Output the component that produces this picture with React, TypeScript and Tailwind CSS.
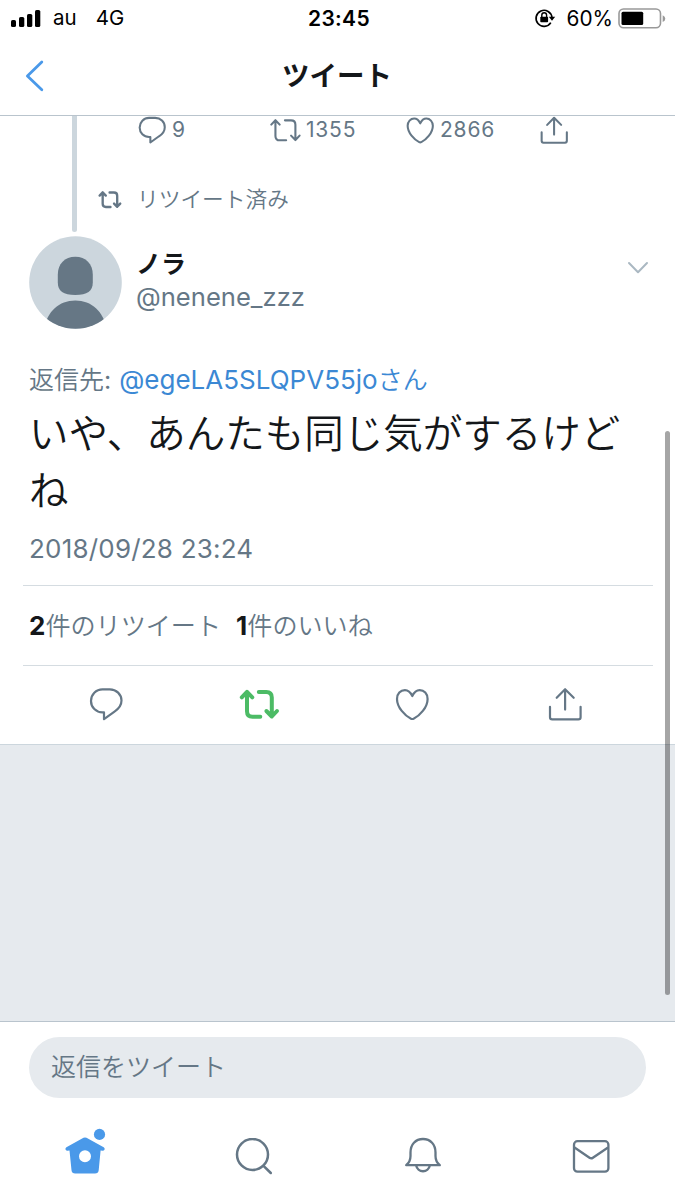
import type { ReactNode } from "react";

type IconProps = { className?: string; strokeWidth?: number };

const CommentIcon = ({ className, strokeWidth = 2.2 }: IconProps) => (
  <svg viewBox="0 0 34 34" fill="none" stroke="currentColor" strokeWidth={strokeWidth} strokeLinejoin="round" className={className}>
    <path d="M13.5 2.3h7.3c6.6 0 11.7 5 11.7 11.3 0 5-2.6 8.2-7 11L15 32.2v-6.8h-1.5C7 25.4 2 20.3 2 13.9S7 2.3 13.5 2.3z" />
  </svg>
);

const RetweetIcon = ({ className, strokeWidth = 4 }: IconProps) => (
  <svg viewBox="0 0 41 32" fill="none" stroke="currentColor" strokeWidth={strokeWidth} strokeLinecap="round" strokeLinejoin="round" className={className}>
    <path d="M2.8 9.3l5.2-5.5 5.3 5.5M8 4.5v18.8c0 3.8 1.7 5.5 5.5 5.5h7.8" />
    <path d="M19.8 4h7.5c3.8 0 5.5 1.7 5.5 5.5v18M27.4 23l5.4 5.5L38 23" />
  </svg>
);

const HeartIcon = ({ className, strokeWidth = 2.2 }: IconProps) => (
  <svg viewBox="0 0 34 34" fill="none" stroke="currentColor" strokeWidth={strokeWidth} strokeLinejoin="round" className={className}>
    <path d="M17.3 9C15.5 5.2 12.8 3.1 9.9 3.1 5.5 3.1 2 6.8 2 11.9c0 8.5 8 17 14 19.8q1.3.6 2.6 0c6-2.8 14-11.3 14-19.8 0-5.1-3.5-8.8-7.9-8.8-2.9 0-5.6 2.1-7.4 5.9z" />
  </svg>
);

const ShareIcon = ({ className, strokeWidth = 2.2 }: IconProps) => (
  <svg viewBox="0 0 34 34" fill="none" stroke="currentColor" strokeWidth={strokeWidth} strokeLinecap="round" strokeLinejoin="round" className={className}>
    <path d="M8.7 10.8l8.4-8.6 8.6 8.6M17.1 2.6v20" />
    <path d="M2 19.8v10.4q0 2.2 2.2 2.2h26.2q2.2 0 2.2-2.2V19.8" />
  </svg>
);

const StatusBar = () => (
  <div className="flex h-[37px] shrink-0 text-black">
    <div className="flex w-[225px] items-center pl-[10px]">
      <svg viewBox="0 0 32 20" className="h-5 w-8 -translate-y-px">
        <rect x="1" y="12" width="5" height="7" rx="1.6" />
        <rect x="9" y="9" width="5.3" height="10" rx="1.6" />
        <rect x="17" y="6" width="5.3" height="13" rx="1.6" />
        <rect x="25" y="2" width="5.3" height="17" rx="1.6" />
      </svg>
      <span className="ml-[11px] text-[20.5px]">au</span>
      <span className="ml-[19px] text-[20.5px]">4G</span>
    </div>
    <div className="flex w-[228px] items-center justify-center text-[21px] font-semibold tracking-[0.3px]">23:45</div>
    <div className="flex flex-1 items-center justify-end pr-[9px]">
      <svg viewBox="0 0 22 20" className="h-5 w-[22px] -translate-y-px">
        <path d="M16.8 14.6A8 8 0 1 1 18 9.5" fill="none" stroke="black" strokeWidth="1.7" />
        <path d="M14.8 8.8h6.4L18 12.7z" />
        <rect x="6.3" y="8.8" width="7.8" height="5.5" rx="0.8" />
        <path d="M7.8 9V7.2a2.4 2.4 0 0 1 4.8 0V9" fill="none" stroke="black" strokeWidth="1.4" />
      </svg>
      <span className="ml-[11px] text-[20.8px]">60%</span>
      <svg viewBox="0 0 48 22" className="ml-[5px] h-[22px] w-12">
        <rect x="1" y="1" width="41.5" height="18.8" rx="4.5" fill="none" stroke="#999" strokeWidth="1.6" />
        <rect x="3.5" y="3.7" width="21.7" height="13.4" rx="1.5" />
        <path d="M44.7 7.3q2.6 1.2 2.6 3.4t-2.6 3.4z" fill="#999" />
      </svg>
    </div>
  </div>
);

const Header = () => (
  <header className="flex h-[79px] shrink-0 items-center border-b border-[#b9c4cd]">
    <div className="w-[225px] pl-[25px]">
      <svg viewBox="0 0 20 32" className="h-8 w-5" fill="none" stroke="#4a99e9" strokeWidth="2.8" strokeLinecap="round" strokeLinejoin="round">
        <path d="M16.8 2L2.4 16l14.4 13.8" />
      </svg>
    </div>
    <h1 className="w-[224px] pt-[2px] text-center text-[27.5px] leading-none font-bold text-[#14171a]">ツイート</h1>
  </header>
);

const Stat = ({ icon, value, className }: { icon: ReactNode; value?: string; className: string }) => (
  <div className={`flex items-center ${className}`}>
    {icon}
    <span className="text-[21px] leading-none tracking-[0.8px]">{value}</span>
  </div>
);

const ParentTweet = () => (
  <div className="flex h-[117px]">
    <div className="flex w-[98px] justify-end pr-[21px]">
      <div className="h-[116px] w-[5px] rounded-b-sm bg-[#ccd6dd]" />
    </div>
    <div className="flex flex-1 flex-col">
      <div className="flex h-[27px] items-center pl-10">
        <Stat className="w-[131px] gap-[6px]" icon={<CommentIcon strokeWidth={2.5} className="h-7 w-7" />} value="9" />
        <Stat className="w-[137px] gap-1" icon={<RetweetIcon strokeWidth={2.6} className="h-[26px] w-[33px]" />} value="1355" />
        <Stat className="w-[134px] gap-[6px]" icon={<HeartIcon strokeWidth={2.5} className="h-7 w-7" />} value="2866" />
        <ShareIcon strokeWidth={2.5} className="h-7 w-7" />
      </div>
      <div className="mt-[44px] flex h-6 items-center gap-[15px]">
        <RetweetIcon className="h-[19px] w-6" />
        <span className="pt-px text-[21.7px] leading-none font-[350]">リツイート済み</span>
      </div>
    </div>
  </div>
);

const Avatar = () => (
  <svg viewBox="0 0 93 93" className="h-[93px] w-[93px] shrink-0">
    <clipPath id="avatar">
      <circle cx="46.5" cy="46.5" r="46.3" />
    </clipPath>
    <g clipPath="url(#avatar)">
      <rect width="93" height="93" fill="#ccd6dd" />
      <path d="M46.3 20.7c-10.5 0-17.5 7-17.5 18v7.5c0 9 5.5 12.7 17.5 12.7s17.5-3.7 17.5-12.7v-7.5c0-11-7-18-17.5-18z" fill="#667785" />
      <path d="M15 93c3-17.5 15-28.5 31.3-28.5S74.6 75.5 77.6 93z" fill="#667785" />
    </g>
  </svg>
);

const Author = () => (
  <div className="flex h-[95px] pt-[2.5px] pl-[28.5px]">
    <Avatar />
    <div className="flex flex-1 flex-col pt-[14.5px] pl-[14.5px]">
      <span className="text-[25px] leading-[28px] font-bold text-[#14171a]">ノラ</span>
      <span className="mt-[3px] text-[25.6px] leading-[32px]">@nenene_zzz</span>
    </div>
    <svg viewBox="0 0 22 14" className="mt-[25px] mr-[26px] h-[14px] w-[22px]" fill="none" stroke="#aab8c2" strokeWidth="2" strokeLinecap="round" strokeLinejoin="round">
      <path d="M2 2l9 9.2L20 2" />
    </svg>
  </div>
);

const Actions = () => (
  <div className="flex h-[78px] items-center pb-[2px] pl-[29px]">
    <div className="flex w-[153px] justify-center"><CommentIcon className="h-[34px] w-[34px]" /></div>
    <div className="flex w-[153px] justify-center pl-[2px]"><RetweetIcon className="h-8 w-[41px] text-[#4cbb65]" /></div>
    <div className="flex w-[153px] justify-center"><HeartIcon className="h-[34px] w-[34px]" /></div>
    <div className="flex w-[153px] justify-center"><ShareIcon className="h-[34px] w-[34px]" /></div>
  </div>
);

const TabBar = () => (
  <nav className="flex h-[102px] pt-[30px]">
    <div className="flex w-[169px] justify-center">
      <svg viewBox="0 0 42 48" className="h-12 w-[42px]" fill="#4a99e9">
        <path fillRule="evenodd" d="M21 9.4q.8 0 1.5.4l17.2 9.5q1.3.8.9 2.3-.4 1.300-1.900 1.100l-2.100-.2-1.900 19.700q-.4 3.300-3.700 3.300H11.200q-3.300 0-3.700-3.300l-2-19.700-2.100.2Q1.900 22.900 1.500 21.600q-.4-1.500.9-2.300l17.100-9.500q.7-.4 1.500-.4zM21 22.200a6 6 0 1 0 0 12 6 6 0 0 0 0-12z" />
        <circle cx="35.5" cy="6.4" r="5.6" />
      </svg>
    </div>
    <div className="flex w-[169px] justify-center pt-[10px]">
      <svg viewBox="0 0 38 38" className="h-[38px] w-[38px]" fill="none" stroke="currentColor" strokeWidth="2.5" strokeLinecap="round">
        <circle cx="17.5" cy="16.5" r="15.5" />
        <path d="M28.5 27.8l7.3 7.2" />
      </svg>
    </div>
    <div className="flex w-[169px] justify-center pt-[9px]">
      <svg viewBox="0 0 38 38" className="h-[38px] w-[38px]" fill="none" stroke="currentColor" strokeWidth="2.3" strokeLinecap="round" strokeLinejoin="round">
        <path d="M2.2 28.2q4.3-3.5 4.3-9.2v-3.5C6.5 7.5 11.5 2 19 2s12.500 5.500 12.500 13.500V19q0 5.700 4.300 9.200z" />
        <path d="M12.2 28.500a6.900 6.900 0 0 0 13.600 0" />
      </svg>
    </div>
    <div className="flex w-[168px] justify-center pt-[10.5px]">
      <svg viewBox="0 0 38 36" className="h-9 w-[38px]" fill="none" stroke="currentColor" strokeWidth="2.3" strokeLinejoin="round">
        <rect x="2" y="2.2" width="34.4" height="30.5" rx="3.5" />
        <path d="M2.5 8.5l15 10.2q1.7 1.2 3.4 0L36 8.5" />
      </svg>
    </div>
  </nav>
);

export default function App() {
  return (
    <div className="relative flex h-[1200px] w-[675px] flex-col overflow-hidden bg-white font-['Inter','Noto_Sans_CJK_JP',sans-serif] text-[#657786]">
      <StatusBar />
      <Header />
      <main className="flex flex-1 flex-col bg-[#e6eaee]">
        <article className="border-b border-[#ccd6dd] bg-white">
          <ParentTweet />
          <Author />
          <p className="mt-[36px] pl-[29px] text-[25px] leading-[32px] whitespace-nowrap">
            <span className="font-[350]">返信先</span>:{" "}
            <span className="ml-px text-[#3b88d4]">
              <span className="text-[26px]">@egeLA5SLQPV55jo</span>
              <span className="font-[350]">さん</span>
            </span>
          </p>
          <p className="mt-[10px] pl-[29px] text-[39.5px] leading-[57px] font-[350] whitespace-nowrap text-[#14171a]">
            いや、あんたも同じ気がするけど
            <br />
            ね
          </p>
          <p className="mt-[13px] pl-[29px] text-[26px] leading-[32px] tracking-[0.2px]">2018/09/28 23:24</p>
          <div className="mt-[20px] mr-[22px] ml-[23px] flex h-[81px] items-center gap-[15px] border-y border-[#d5dce1] pl-[6px] text-[25.1px] font-[350]">
            <span><b className="text-[26px] font-bold text-[#14171a]">2</b>件のリツイート</span>
            <span><b className="text-[26px] font-bold text-[#14171a]">1</b>件のいいね</span>
          </div>
          <Actions />
        </article>
      </main>
      <footer className="border-t border-[#b9c4cd] bg-white">
        <div className="px-[29px] pt-[15px]">
          <div className="flex h-[61px] items-center rounded-full bg-[#e6eaee] pt-px pl-[22px] text-[25px] font-[350]">返信をツイート</div>
        </div>
        <TabBar />
      </footer>
      <div className="absolute top-[431px] left-[665px] h-[564px] w-[5px] rounded-full bg-black/35" />
    </div>
  );
}
